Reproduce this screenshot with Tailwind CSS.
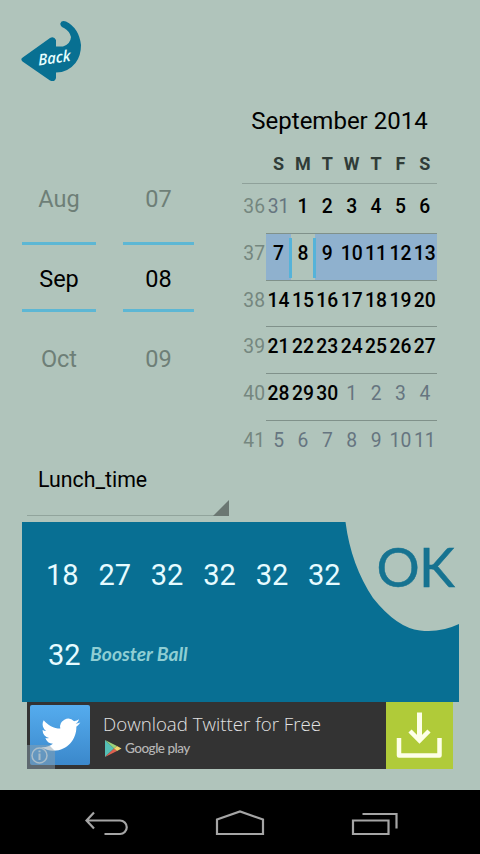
<!DOCTYPE html>
<html lang="en">
<head>
  <meta charset="UTF-8" />
  <meta name="viewport" content="width=device-width, initial-scale=1.0"/>
  <title>Check Results</title>
  <script src="https://cdn.jsdelivr.net/npm/@tailwindcss/browser@4"></script>
</head>
<body class="bg-[#b0c4bb] font-[Roboto,sans-serif] text-black">

  <div class="w-[480px] h-[854px] flex flex-col overflow-hidden">

    <!-- Header -->
    <header class="h-[95px] shrink-0">
      <svg class="block" width="120" height="95" viewBox="0 0 120 95">
        <path d="M22 58Q20.500 59.500 22.500 61.500L50 80.500Q55 82.500 56 78V72.500Q68 72.500 75.500 63Q81 56 81 45Q79 28 66 21.500Q61.500 20 60.300 23.500Q60.300 26.500 64 28Q69.500 31 71 37Q70.500 44 63 46.500H56V40Q54 36 50 38Z" fill="#087092"/>
        <text transform="translate(38.500 65.500) rotate(-8) skewX(-5)" font-family="Open Sans, sans-serif" font-size="15.500" font-weight="600" font-style="italic" fill="#e6ffff" textLength="32.500" lengthAdjust="spacingAndGlyphs">Back</text>
      </svg>
    </header>

    <!-- Date picker -->
    <main class="flex h-[360px] shrink-0">
      <div class="flex pl-[22px] pt-16 w-[242px] gap-[27px] text-[23.500px] leading-9 text-center">
        <div class="w-[74px]">
          <div class="h-[83px] pt-[22px] text-[#6e7f77]">Aug</div>
          <div class="h-[70px] border-y-3 border-[#5db7d4] pt-4">Sep</div>
          <div class="h-20 pt-[29px] text-[#6e7f77]">Oct</div>
        </div>
        <div class="w-[71px]">
          <div class="h-[83px] pt-[22px] text-[#6e7f77]">07</div>
          <div class="h-[70px] border-y-3 border-[#5db7d4] pt-4">08</div>
          <div class="h-20 pt-[29px] text-[#6e7f77]">09</div>
        </div>
      </div>

      <div class="w-[195px]">
        <h2 class="h-[52px] pt-2 text-[24px] leading-9 text-center">September 2014</h2>
        <div class="grid grid-cols-8 h-[37px] pt-[3px] text-[18px] leading-[27px] font-bold text-[#303c38] text-center border-b border-[#8fa19a]">
          <span></span><span>S</span><span>M</span><span>T</span><span>W</span><span>T</span><span>F</span><span>S</span>
        </div>
        <div id="weeks" class="pt-[3px]"></div>
      </div>
    </main>

    <!-- Draw selector -->
    <div class="h-[67px] shrink-0 pl-[27px]">
      <div class="relative w-[202px] h-[61px] pl-[11px] pt-2 text-[21.300px] leading-[33px] border-b border-[#91a49c]">
        Lunch_time
        <svg class="absolute right-0 -bottom-px" width="16" height="16"><path d="M0 16L16 0V16Z" fill="#6b7772"/></svg>
      </div>
    </div>

    <!-- Results -->
    <section class="relative w-[437px] h-[180px] shrink-0 ml-[21.500px] bg-[#086f93] text-[#e6fbff] text-[29px] leading-9">
      <svg class="absolute left-0 top-0" width="437" height="180">
        <path d="M323.500 0Q329 43 351 76Q375 106 398 108.500Q418 111 437 102V0Z" fill="#b0c4bb"/>
        <text x="354.500 397" y="65" font-family="Lato, sans-serif" font-size="54" fill="#167391" stroke="#167391" stroke-width=".5">OK</text>
      </svg>
      <div class="relative flex gap-[19.800px] pl-[24.500px] pt-[35px]">
        <span>18</span><span>27</span><span>32</span><span>32</span><span>32</span><span>32</span>
      </div>
      <div class="relative flex items-center pl-[26.500px] pt-11">
        <span>32</span>
        <span class="pl-[9.500px] -mt-0.5 font-[Lato,sans-serif] text-[19.300px] font-bold italic text-[#8fced3]">Booster Ball</span>
      </div>
    </section>

    <!-- Ad banner -->
    <div class="flex w-[426px] h-[67px] shrink-0 ml-[27px] bg-[#333333] font-['Open_Sans',sans-serif]">
      <svg class="shrink-0" width="68" height="67">
        <defs>
          <linearGradient id="sky" x2="0" y2="1"><stop stop-color="#55acee"/><stop offset="1" stop-color="#3b88cb"/></linearGradient>
        </defs>
        <rect x="3" y="3" width="60" height="60" rx="2" fill="url(#sky)"/>
        <g transform="translate(14 13) scale(1.640)">
          <path fill="#fff" d="M23.953 4.570a10 10 0 01-2.825.775 4.958 4.958 0 002.163-2.723c-.951.555-2.005.959-3.127 1.184a4.920 4.920 0 00-8.384 4.482C7.690 8.095 4.067 6.130 1.640 3.162a4.822 4.822 0 00-.666 2.475c0 1.710.870 3.213 2.188 4.096a4.904 4.904 0 01-2.228-.616v.060a4.923 4.923 0 003.946 4.827 4.996 4.996 0 01-2.212.085 4.936 4.936 0 004.604 3.417 9.867 9.867 0 01-6.102 2.105c-.390 0-.779-.023-1.170-.067a13.995 13.995 0 007.557 2.209c9.053 0 13.998-7.496 13.998-13.985 0-.210 0-.420-.015-.630A9.935 9.935 0 0024 4.590z"/>
        </g>
        <path d="M0 43H22L28 49V67H0Z" fill="#8aa0ad" fill-opacity=".5"/>
        <circle cx="12.500" cy="53.500" r="7.500" fill="none" stroke="#a9bdca" stroke-width="1.500"/>
        <path d="M12.500 51.500V58M12.500 48.500V50.300" stroke="#a9bdca" stroke-width="2"/>
      </svg>
      <div class="flex-1 pl-2 pt-[7px]">
        <p class="text-[18.700px] leading-[30px] font-light text-[#e2e2e2] whitespace-nowrap">Download Twitter for Free</p>
        <div class="flex items-start">
          <svg class="block shrink-0" width="22" height="20">
            <path d="M2 1L11 9.500L2 18Z" fill="#55bfb5"/>
            <path d="M2 1L14 7L11 9.500Z" fill="#9ad27b"/>
            <path d="M2 18L14 12L11 9.500Z" fill="#de6250"/>
            <path d="M14 7L18.500 9.500L14 12L11 9.500Z" fill="#eed36b"/>
          </svg>
          <span class="font-[Lato,sans-serif] text-[13.500px] leading-[18px] font-medium tracking-[-0.5px] text-[#b6b6b6] whitespace-nowrap">Google play</span>
        </div>
      </div>
      <svg class="shrink-0 bg-[#b0cb39]" width="67" height="67" fill="none" stroke="#fdffe8">
        <path d="M13 36V53.500H53.500V36" stroke-width="4.500" stroke-linejoin="round"/>
        <path d="M33.500 10.500V38" stroke-width="5"/>
        <path d="M24 29L33.500 38.500L43 29" stroke-width="4.500"/>
      </svg>
    </div>

    <!-- System navigation -->
    <nav class="mt-auto h-16 shrink-0 bg-black">
      <svg class="block" width="480" height="64" fill="none" stroke="#a5a5a5" stroke-width="2.200">
        <path d="M94 22.500L86.500 30.500L94 38.500M87 30.500H120A6.700 6.700 0 0 1 120 44H104.500"/>
        <path d="M217 44V29.500L240 21.500L263 29.500V44Z"/>
        <path d="M353 30.500H388.500V44H353ZM362.500 24H396.500V38.500"/>
      </svg>
    </nav>
  </div>

  <script>
    const weeks = [
      [36, 31, 1, 2, 3, 4, 5, 6],
      [37, 7, 8, 9, 10, 11, 12, 13],
      [38, 14, 15, 16, 17, 18, 19, 20],
      [39, 21, 22, 23, 24, 25, 26, 27],
      [40, 28, 29, 30, 1, 2, 3, 4],
      [41, 5, 6, 7, 8, 9, 10, 11]
    ];
    const list = document.getElementById("weeks");

    weeks.forEach((week, row) => {
      const item = document.createElement("div");
      item.className = "grid grid-cols-8 h-[46.750px] text-[19.300px] leading-[39px] text-center";

      week.forEach((day, col) => {
        const cell = document.createElement("span");
        const outside = (row === 0 && day > 7) || (row > 3 && day < 15);
        let style = "flex justify-center font-medium text-black";
        if (col === 0) style = "flex justify-center text-[#75877f]";
        else if (outside) style = "flex justify-center text-[#667580]";
        if (col > 0 && row < 5) style += " border-b border-[#80918a]";
        if (row === 1 && col > 0 && day !== 8) style += " bg-[#8fb1ce]";
        // selected day sits between two handles
        if (day === 8 && row === 1) style += " relative before:absolute before:-left-0.5 before:top-1 before:bottom-0.5 before:w-[3px] before:bg-[#55b3d9] after:absolute after:-right-px after:top-1 after:bottom-0.5 after:w-[3px] after:bg-[#55b3d9] after:z-10";
        cell.className = style;
        cell.textContent = day;
        item.appendChild(cell);
      });

      list.appendChild(item);
    });
  </script>
</body>
</html>
